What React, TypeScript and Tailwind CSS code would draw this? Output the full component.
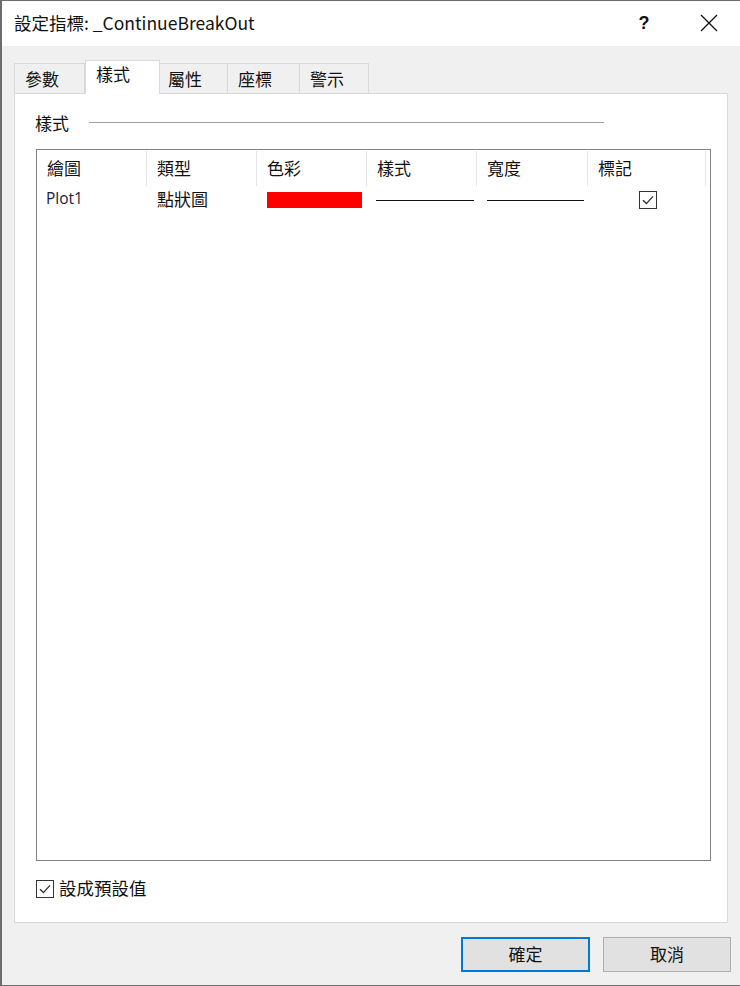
import React from "react";

const font = { fontFamily: '"Noto Sans CJK TC", "Noto Sans", sans-serif' };

function Check() {
  return (
    <div className="w-[18px] h-[18px] border border-[#333] bg-white flex items-center justify-center">
      <svg width="14" height="14" viewBox="0 0 14 14">
        <path d="M2 7.2 L5.4 10.6 L12 3.4" fill="none" stroke="#333" strokeWidth="1.4" />
      </svg>
    </div>
  );
}

const cols = ["繪圖", "類型", "色彩", "樣式", "寬度", "標記"];

export default function App() {
  return (
    <div
      className="w-[740px] h-[986px] bg-[#f0f0f0] border-t border-l-2 border-b border-[#6d6d6d] flex flex-col text-[#111] overflow-hidden leading-none"
      style={font}
    >
      {/* title bar */}
      <div className="h-[45px] bg-white flex items-center pl-[12px] shrink-0 pb-[2px]">
        <span className="text-[17.5px]">設定指標: _ContinueBreakOut</span>
        <span className="ml-auto text-[18px] font-semibold w-[20px] text-center mr-[46px]" style={{ fontFamily: '"Liberation Sans", sans-serif' }}>?</span>
        <svg width="18" height="18" viewBox="0 0 18 18" className="mr-[22px]">
          <path d="M1 1 L17 17 M17 1 L1 17" stroke="#111" strokeWidth="1.3" />
        </svg>
      </div>

      {/* tabs */}
      <div className="flex items-end pl-[12px] mt-[13px] h-[34px] relative z-10">
        <div className="w-[71px] h-[30px] border border-b-0 border-[#d9d9d9] bg-[#f0f0f0] text-[17px] flex items-center pl-[10px] pb-[1px]">參數</div>
        <div className="w-[75px] h-[34px] border border-b-0 border-[#d9d9d9] bg-white text-[17px] flex items-start pt-[4px] pl-[10px] -mb-px">樣式</div>
        <div className="w-[68px] h-[30px] border border-b-0 border-l-0 border-[#d9d9d9] bg-[#f0f0f0] text-[17px] flex items-center pl-[8px] pb-[1px]">屬性</div>
        <div className="w-[72px] h-[30px] border border-b-0 border-l-0 border-[#d9d9d9] bg-[#f0f0f0] text-[17px] flex items-center pl-[10px] pb-[1px]">座標</div>
        <div className="w-[69px] h-[30px] border border-b-0 border-l-0 border-[#d9d9d9] bg-[#f0f0f0] text-[17px] flex items-center pl-[10px] pb-[1px]">警示</div>
      </div>

      {/* panel */}
      <div className="ml-[12px] w-[714px] h-[830px] bg-white border border-[#d9d9d9] flex flex-col shrink-0">
        <div className="flex items-center mt-[17px] pl-[20px] h-[22px]">
          <span className="text-[17px] w-[54px]">樣式</span>
          <div className="w-[515px] h-px bg-[#a0a0a0]" />
        </div>
        <div className="ml-[21px] mt-[16px] w-[675px] h-[712px] border border-[#828282] flex flex-col">
          <div className="flex h-[36px] pt-px">
            {cols.map((c, i) => (
              <div
                key={c}
                className={`h-[35px] flex items-center pl-[10px] pb-[2px] text-[17px] border-r border-[#e5e5e5] ${i === 5 ? "w-[118px]" : i === 4 ? "w-[111px]" : "w-[110px]"}`}
              >
                {c}
              </div>
            ))}
          </div>
          <div className="flex h-[26px] items-center mt-[1px]">
            <div className="w-[110px] pl-[9px] pb-[3px] text-[#1b1b3a]" style={{ fontFamily: '"Open Sans", "Noto Sans", sans-serif', fontSize: 15.5 }}>Plot1</div>
            <div className="w-[110px] pl-[10px] pb-[4px] text-[17px]">點狀圖</div>
            <div className="w-[110px] pl-[10px]">
              <div className="w-[95px] h-[16px] bg-[#ff0000]" />
            </div>
            <div className="w-[110px] pl-[9px]">
              <div className="w-[98px] h-px bg-[#111]" />
            </div>
            <div className="w-[111px] pl-[10px]">
              <div className="w-[97px] h-px bg-[#111]" />
            </div>
            <div className="w-[118px] flex pl-[51px]">
              <Check />
            </div>
          </div>
        </div>
        <div className="flex items-center ml-[21px] mt-[18px] gap-[5px]">
          <Check />
          <span className="text-[17.5px] pb-[2px]">設成預設值</span>
        </div>
      </div>

      {/* buttons */}
      <div className="flex ml-[459px] mt-[14px] gap-[13px]">
        <button className="w-[129px] h-[35px] bg-[#e1e1e1] border-2 border-[#0078d7] text-[17px] flex items-center justify-center pb-[2px]" style={font}>確定</button>
        <button className="w-[128px] h-[35px] bg-[#e1e1e1] border border-[#adadad] text-[17px] flex items-center justify-center pb-[2px]" style={font}>取消</button>
      </div>
    </div>
  );
}
